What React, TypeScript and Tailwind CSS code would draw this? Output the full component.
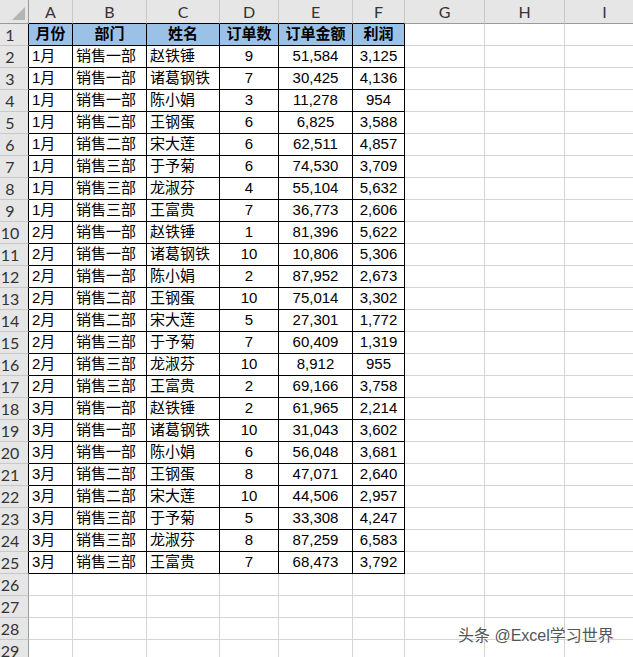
import React from 'react';

const cols = ['A', 'B', 'C', 'D', 'E', 'F', 'G', 'H', 'I'];
const widths = ['w-[44px]', 'w-[74px]', 'w-[73px]', 'w-[59px]', 'w-[74px]', 'w-[52px]', 'w-[80px]', 'w-[80px]', 'w-[80px]'];

const head = ['月份', '部门', '姓名', '订单数', '订单金额', '利润'];

const rows: string[][] = [
  ['1月', '销售一部', '赵铁锤', '9', '51,584', '3,125'],
  ['1月', '销售一部', '诸葛钢铁', '7', '30,425', '4,136'],
  ['1月', '销售一部', '陈小娟', '3', '11,278', '954'],
  ['1月', '销售二部', '王钢蛋', '6', '6,825', '3,588'],
  ['1月', '销售二部', '宋大莲', '6', '62,511', '4,857'],
  ['1月', '销售三部', '于予菊', '6', '74,530', '3,709'],
  ['1月', '销售三部', '龙淑芬', '4', '55,104', '5,632'],
  ['1月', '销售三部', '王富贵', '7', '36,773', '2,606'],
  ['2月', '销售一部', '赵铁锤', '1', '81,396', '5,622'],
  ['2月', '销售一部', '诸葛钢铁', '10', '10,806', '5,306'],
  ['2月', '销售一部', '陈小娟', '2', '87,952', '2,673'],
  ['2月', '销售二部', '王钢蛋', '10', '75,014', '3,302'],
  ['2月', '销售二部', '宋大莲', '5', '27,301', '1,772'],
  ['2月', '销售三部', '于予菊', '7', '60,409', '1,319'],
  ['2月', '销售三部', '龙淑芬', '10', '8,912', '955'],
  ['2月', '销售三部', '王富贵', '2', '69,166', '3,758'],
  ['3月', '销售一部', '赵铁锤', '2', '61,965', '2,214'],
  ['3月', '销售一部', '诸葛钢铁', '10', '31,043', '3,602'],
  ['3月', '销售一部', '陈小娟', '6', '56,048', '3,681'],
  ['3月', '销售二部', '王钢蛋', '8', '47,071', '2,640'],
  ['3月', '销售二部', '宋大莲', '10', '44,506', '2,957'],
  ['3月', '销售三部', '于予菊', '5', '33,308', '4,247'],
  ['3月', '销售三部', '龙淑芬', '8', '87,259', '6,583'],
  ['3月', '销售三部', '王富贵', '7', '68,473', '3,792'],
];

const font = "font-['Liberation_Sans','Noto_Sans_CJK_SC',sans-serif]";

function Cell({ ci, r }: { ci: number; r: number }) {
  // r: 1 = table header, 2..25 data, beyond that empty grid
  const inTable = ci < 6 && r <= 25;
  let text = '';
  if (inTable) text = r === 1 ? head[ci] : rows[r - 2][ci];
  const align = ci < 3 && r > 1 ? 'justify-start pl-[3px]' : 'justify-center';
  return (
    <div
      className={`${widths[ci]} shrink-0 h-full flex items-center ${align} border-r border-b ${
        inTable ? 'border-black' : 'border-[#d4d4d4]'
      } ${r === 1 && inTable ? 'bg-[#9bc2e6] font-bold' : 'bg-white'} text-[15px] text-black whitespace-nowrap`}
    >
      {text}
    </div>
  );
}

export default function App() {
  const rowNums = Array.from({ length: 29 }, (_, i) => i + 1);
  return (
    <div className={`relative w-[633px] h-[657px] overflow-hidden bg-white ${font}`}>
      <div className="flex h-[24px]">
        <div className="w-[29px] shrink-0 h-full bg-[#e6e6e6] border-r border-b border-[#9b9b9b] relative">
          <div className="absolute right-[3px] bottom-[3px] w-0 h-0 border-l-[13px] border-l-transparent border-b-[13px] border-b-[#b4b4b4]" />
        </div>
        {cols.map((c, i) => (
          <div
            key={c}
            className={`${widths[i]} shrink-0 h-full bg-[#e6e6e6] border-r border-[#c8c8c8] border-b ${
              i < 6 ? 'border-b-black' : 'border-b-[#9b9b9b]'
            } flex items-center justify-center text-[16px] text-[#333] font-['Lato',sans-serif]`}
          >
            {c}
          </div>
        ))}
      </div>
      {rowNums.map((r) => (
        <div key={r} className="flex h-[22px]">
          <div
            className={`w-[29px] shrink-0 h-full bg-[#e6e6e6] border-b border-[#c8c8c8] border-r ${
              r <= 25 ? 'border-r-black' : 'border-r-[#9b9b9b]'
            } flex items-center justify-center pr-[8px] text-[16px] text-[#333] font-['Lato',sans-serif]`}
          >
            {r}
          </div>
          {cols.map((c, ci) => (
            <Cell key={c} ci={ci} r={r} />
          ))}
        </div>
      ))}
      <div className="absolute left-[458px] top-[624px] text-[16px] text-[#555] [text-shadow:0_0_2px_#fff,0_0_2px_#fff] font-['Liberation_Sans','Noto_Sans_CJK_SC',sans-serif] whitespace-nowrap">
        头条 @Excel学习世界
      </div>
    </div>
  );
}
